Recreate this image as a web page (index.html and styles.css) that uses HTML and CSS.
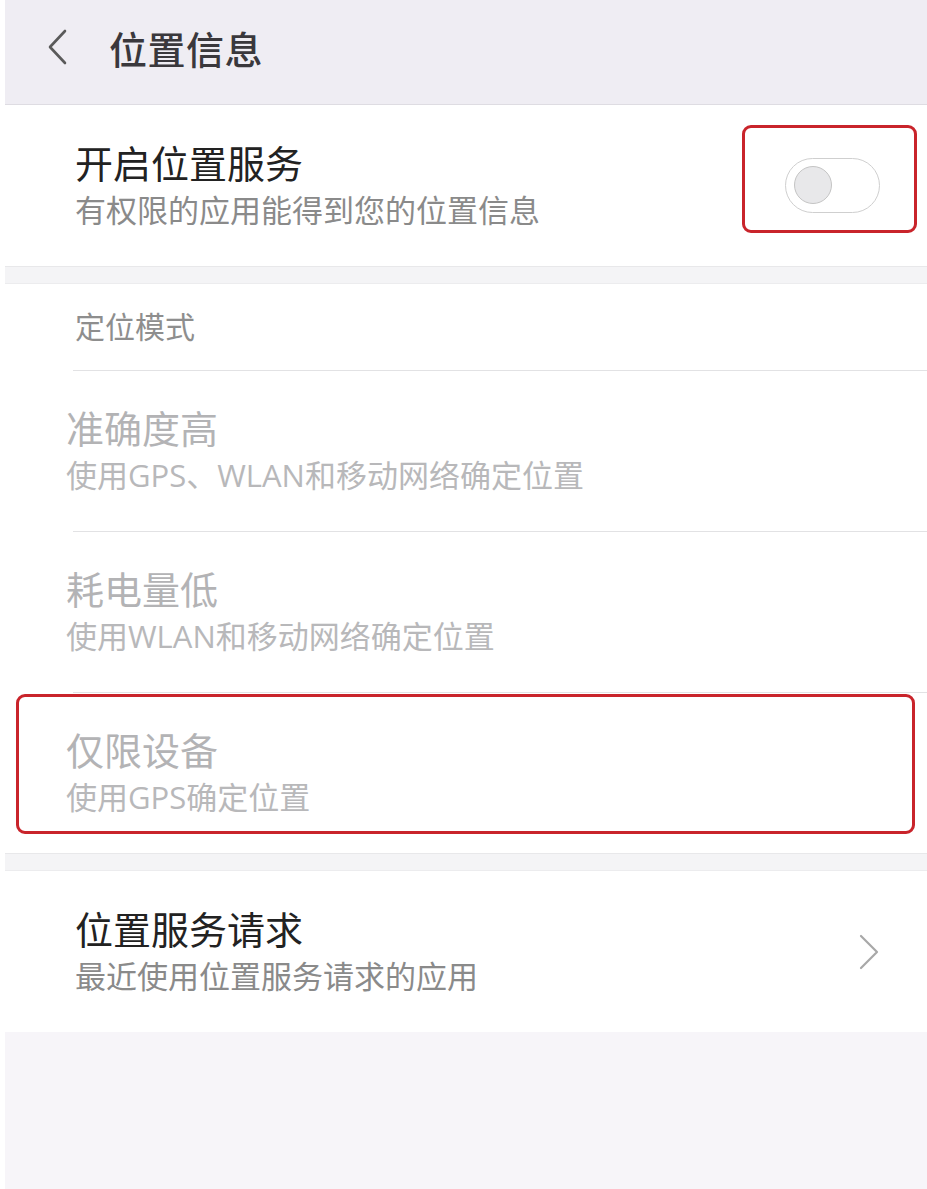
FILE: index.html
```html
<!DOCTYPE html>
<html lang="zh-CN">
<head>
    <meta charset="UTF-8">
    <title>位置信息</title>
    <link rel="stylesheet" href="styles.css">
</head>
<body>
    <div class="page">
        <!-- 顶部标题栏 -->
        <header class="top-bar">
            <svg class="back-icon" width="24" height="38" viewBox="0 0 24 38">
                <path d="M19 3 L4 19 L19 35" fill="none" stroke="#5a5a5a" stroke-width="2.6" stroke-linecap="round" stroke-linejoin="round"/>
            </svg>
            <h1 class="top-title">位置信息</h1>
        </header>

        <!-- 开关 -->
        <section class="card">
            <div class="row row-switch">
                <div class="row-text">
                    <div class="row-title">开启位置服务</div>
                    <div class="row-sub">有权限的应用能得到您的位置信息</div>
                </div>
                <div class="switch"><span class="knob"></span></div>
                <div class="mark mark-switch"></div>
            </div>
        </section>

        <div class="gap"></div>

        <!-- 定位模式 -->
        <section class="card">
            <div class="section-label">定位模式</div>
            <div class="row row-mode">
                <div class="row-text">
                    <div class="row-title">准确度高</div>
                    <div class="row-sub">使用GPS、WLAN和移动网络确定位置</div>
                </div>
            </div>
            <div class="row row-mode">
                <div class="row-text">
                    <div class="row-title">耗电量低</div>
                    <div class="row-sub">使用WLAN和移动网络确定位置</div>
                </div>
            </div>
            <div class="row row-mode last">
                <div class="row-text">
                    <div class="row-title">仅限设备</div>
                    <div class="row-sub">使用GPS确定位置</div>
                </div>
                <div class="mark mark-mode"></div>
            </div>
        </section>

        <div class="gap"></div>

        <!-- 位置服务请求 -->
        <section class="card">
            <div class="row row-link">
                <div class="row-text">
                    <div class="row-title">位置服务请求</div>
                    <div class="row-sub">最近使用位置服务请求的应用</div>
                </div>
                <svg class="chevron" width="22" height="36" viewBox="0 0 22 36">
                    <path d="M3 2 L19 18 L3 34" fill="none" stroke="#a8a8a8" stroke-width="2.2" stroke-linecap="round" stroke-linejoin="round"/>
                </svg>
            </div>
        </section>

        <div class="rest"></div>
    </div>
</body>
</html>
```

FILE: styles.css
```css
* {
    margin: 0;
    padding: 0;
    box-sizing: border-box;
}

body {
    background: #fff;
    font-family: "Open Sans", "Noto Sans CJK SC", sans-serif;
    overflow: hidden;
}

.page {
    margin-left: 5px;
    height: 1189px;
    display: flex;
    flex-direction: column;
    background: #f7f5f9;
}

.top-bar {
    height: 105px;
    display: flex;
    align-items: center;
    padding: 0 0 10px 41px;
    background: #efedf3;
    border-bottom: 1px solid #dedce2;
}

.back-icon {
    display: block;
}

.top-title {
    margin-left: 39px;
    font-size: 38px;
    font-weight: 500;
    color: #3a383c;
    letter-spacing: 0.5px;
}

.card {
    background: #fff;
}

.gap {
    height: 18px;
    background: #f4f4f6;
    border-top: 1px solid #e8e8ea;
    border-bottom: 1px solid #ececee;
}

.row {
    position: relative;
    height: 161px;
    display: flex;
    align-items: center;
}

.row-text {
    flex: 1;
}

.row-title {
    font-size: 38px;
    line-height: 46px;
    color: #222;
}

.row-sub {
    margin-top: 2px;
    font-size: 31px;
    line-height: 44px;
    color: #8a8a8a;
}

.row-switch,
.row-link {
    padding: 0 47px 0 70px;
}

.section-label {
    height: 86px;
    line-height: 86px;
    padding-left: 70px;
    font-size: 30px;
    color: #8e8e8e;
}

.row-mode {
    padding-left: 61px;
}

.row-mode::before {
    content: '';
    position: absolute;
    top: 0;
    left: 68px;
    right: 0;
    height: 1px;
    background: #e2e2e4;
}

.row-mode .row-title {
    color: #b3b3b5;
}

.row-mode .row-sub {
    color: #b8b8ba;
}

.switch {
    position: relative;
    width: 95px;
    height: 55px;
    border: 1px solid #cfcfcf;
    border-radius: 28px;
    background: #fff;
}

.knob {
    position: absolute;
    top: 7px;
    left: 8px;
    width: 38px;
    height: 38px;
    border-radius: 50%;
    background: #e8e8ea;
    border: 1px solid #c4c4c4;
}

.chevron {
    display: block;
}

/* 红色标注框 */
.mark {
    position: absolute;
    border: 3px solid #c9242b;
    border-radius: 9px;
    pointer-events: none;
}

.mark-switch {
    top: 20px;
    right: 10px;
    width: 175px;
    height: 108px;
}

.mark-mode {
    top: 2px;
    left: 11px;
    right: 12px;
    bottom: 19px;
}

.rest {
    flex: 1;
    background: #f7f5f9;
}
```
